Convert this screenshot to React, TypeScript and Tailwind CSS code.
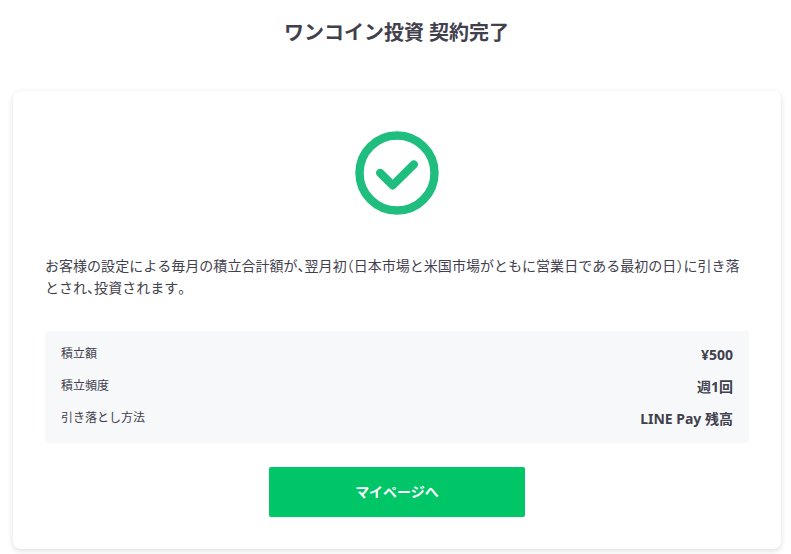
import React from 'react';

const details = [
  { label: '積立額', value: '¥500' },
  { label: '積立頻度', value: '週1回' },
  { label: '引き落とし方法', value: 'LINE Pay 残高' },
];

export default function App() {
  return (
    <main className="h-[554px] overflow-hidden bg-white pl-[13px] pr-[10px] font-['Noto_Sans','Noto_Sans_CJK_JP',sans-serif] text-[#41404d]">
      <h1 className="pr-px pt-[19px] text-center text-[20px] font-bold leading-[28px]">ワンコイン投資 契約完了</h1>
      <section className="mt-11 flex h-[458px] flex-col rounded-lg bg-white px-8 pt-10 shadow-[0_2px_6px_rgba(0,0,0,0.13)]">
        <svg className="h-[84px] w-[84px] self-center" viewBox="0 0 84 84" fill="none" stroke="#1fbe7e">
          <circle cx="42" cy="42" r="37.5" strokeWidth="8.4" />
          <path d="M25.2 42L37.700 54.300L58.800 33.500" strokeWidth="8.2" strokeLinecap="round" strokeLinejoin="round" />
        </svg>
        <p className="mt-10 text-[14px] leading-[22px] tracking-[0.03px] [font-feature-settings:'halt'] [font-kerning:none]">
          お客様の設定による毎月の積立合計額が、翌月初（日本市場と米国市場がともに営業日である最初の日）に引き落とされ、投資されます。
        </p>
        <dl className="mt-8 flex h-28 flex-col rounded bg-[#f7f8fa] px-4 pb-[9px] pt-[7px]">
          {details.map((d) => (
            <div key={d.label} className="flex h-8 items-center justify-between">
              <dt className="text-[12px]">{d.label}</dt>
              <dd className="text-[14px] font-bold">{d.value}</dd>
            </div>
          ))}
        </dl>
        <button className="mt-6 h-[50px] w-64 self-center rounded-xs bg-[#00c667] pb-0.5 text-[14px] font-bold text-white">マイページへ</button>
      </section>
    </main>
  );
}
